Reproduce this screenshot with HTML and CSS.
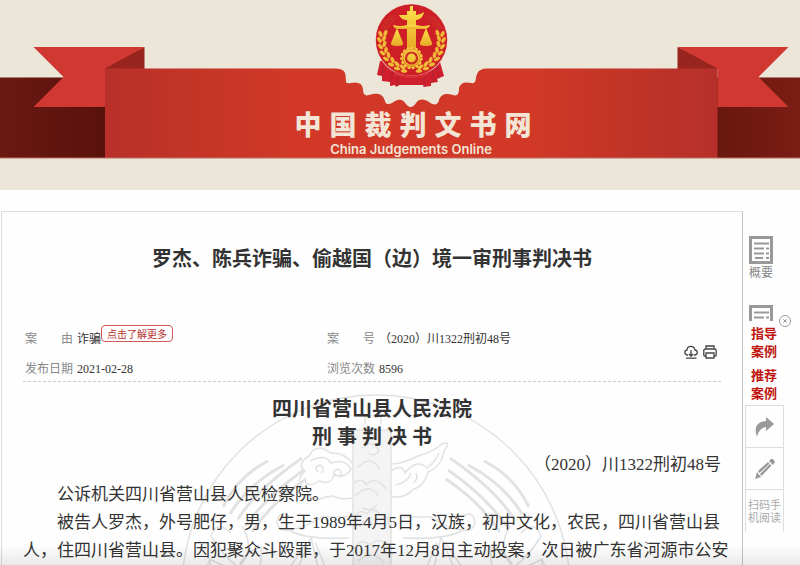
FILE: index.html
```html
<!DOCTYPE html>
<html lang="zh-CN">
<head>
<meta charset="utf-8">
<title>中国裁判文书网</title>
<link rel="stylesheet" href="styles.css">
</head>
<body>
<header class="banner">
  <svg class="banner-art" viewBox="0 0 800 190" preserveAspectRatio="xMidYMin slice" aria-hidden="true">
    <defs>
      <linearGradient id="band" x1="0" x2="1" y1="0" y2="0">
        <stop offset="0" stop-color="#b83029"/><stop offset=".12" stop-color="#c13427"/><stop offset=".3" stop-color="#d13827"/>
        <stop offset=".7" stop-color="#d13827"/><stop offset=".85" stop-color="#c13427"/><stop offset="1" stop-color="#b6302b"/>
      </linearGradient>
      <linearGradient id="darkLeft"><stop offset="0" stop-color="#6b1811"/><stop offset="1" stop-color="#59120d"/></linearGradient>
      <linearGradient id="darkRight"><stop offset="0" stop-color="#68170f"/><stop offset="1" stop-color="#7b1d14"/></linearGradient>
      <linearGradient id="gold" x1="0" x2="0" y1="0" y2="1"><stop offset="0" stop-color="#fbe14b"/><stop offset="1" stop-color="#e9a927"/></linearGradient>
      <g id="grain" fill="#f0bd37" stroke="#f0bd37" stroke-width=".6">
        <ellipse cx="385.500" cy="33" rx="1.500" ry="3" transform="rotate(18 385.500 33)"/>
        <ellipse cx="380.500" cy="34" rx="1.500" ry="3" transform="rotate(-22 380.500 34)"/>
        <ellipse cx="384" cy="38.500" rx="1.500" ry="3" transform="rotate(24 384 38.500)"/>
        <ellipse cx="379.500" cy="40" rx="1.500" ry="3" transform="rotate(-32 379.500 40)"/>
        <ellipse cx="384.500" cy="44" rx="1.500" ry="3" transform="rotate(18 384.500 44)"/>
        <ellipse cx="380.500" cy="46.500" rx="1.500" ry="3" transform="rotate(-42 380.500 46.500)"/>
        <ellipse cx="386" cy="50" rx="1.500" ry="3" transform="rotate(4 386 50)"/>
        <ellipse cx="382.500" cy="53" rx="1.500" ry="3" transform="rotate(-52 382.500 53)"/>
        <ellipse cx="388.500" cy="55" rx="1.500" ry="3" transform="rotate(-8 388.500 55)"/>
        <ellipse cx="386" cy="59" rx="1.500" ry="3" transform="rotate(-62 386 59)"/>
        <ellipse cx="392.500" cy="60" rx="1.500" ry="3" transform="rotate(-22 392.500 60)"/>
        <ellipse cx="391" cy="64.500" rx="1.500" ry="3" transform="rotate(-72 391 64.500)"/>
        <ellipse cx="397" cy="64" rx="1.500" ry="3" transform="rotate(-38 397 64)"/>
        <ellipse cx="397" cy="68.500" rx="1.500" ry="3" transform="rotate(-80 397 68.500)"/>
        <ellipse cx="402.500" cy="67" rx="1.500" ry="3" transform="rotate(-52 402.500 67)"/>
        <ellipse cx="404" cy="71" rx="1.500" ry="3" transform="rotate(-86 404 71)"/>
        <path d="M384 29Q386 22 395 15M386 30Q389 23 396 18M381 29Q384 21 391 16" fill="none" stroke="#c6452a" stroke-width=".8"/>
      </g>
    </defs>
    <path fill="url(#darkLeft)" d="M0 77.500h106V158H0z"/>
    <path fill="url(#darkRight)" d="M716 77.500h84V158h-84z"/>
    <path fill="#ece6d9" d="M0 77h63.500L50 64H0zM758.500 77H800V60h-24z"/>
    <path fill="#97251e" d="M144.500 47v22H105V66zM677.500 47v22H718V66z"/>
    <path fill="#d13832" d="M33.500 47h111L105 68.500v38.500H33.500l30-30zM788.500 47h-111L717.500 68.500v38.500h71l-30-30z"/>
    <path fill="url(#band)" d="M105 68.500H336Q345 68.500 345.500 75L346 82Q347 84 351 83Q362 81 363 89Q363 97 369 95C378 92 383 94 385 101C386 106 391 104 395 101C401 98 404 101 406 104C409 108 413 108 416 103C419 98 425 99 429 102C434 106 438 105 439 100C441 94 446 93 453 95C459 97 459 91 459 88C461 82 466 82 471 83C477 84 475 79 477 74Q479 68.500 487 68.500H717.500V158H105z"/>
    <path d="M0 158h800" stroke="#bd7065"/>
    <path fill="#cf1f2d" d="M380 61l-3 14 5 1v5l8 1v4l5-1 1 2 3-2h25l-1 2 8-1v-3l7-1-1-3 7-3-4-14z"/>
    <path stroke="#a92333" fill="none" d="M382 76l2-12M391 82l2-14M398 86V74M424 86V74M434 82l-2-13M439 78l-2-13"/>
    <circle cx="411.500" cy="40" r="36.500" fill="#f0d7d0"/>
    <circle cx="411.500" cy="40" r="35.700" fill="#cf1f26"/>
    <use href="#grain"/>
    <use href="#grain" transform="matrix(-1 0 0 1 823 0)"/>
    <g fill="url(#gold)">
      <path d="M410 6h3v5h3v4q4 0 8-3-1 7-8 8v28h-9V20q-6 0-8-5h8v-4h3z"/>
      <path d="M393 25q7 2 14 0h9q7 2 14 0-1 4-6 4h-25q-5 0-6-4z"/>
      <path d="M397 28l6 15q1 3-6 3t-6-3zM426 28l6 15q1 3-6 3t-6-3z"/>
      <circle cx="411.500" cy="58" r="10"/>
    </g>
    <circle cx="411.500" cy="58" r="10" fill="none" stroke="#f4cb3a" stroke-width="2.500" stroke-dasharray="2.600 1.600"/>
    <circle cx="411.500" cy="58" r="5.500" fill="none" stroke="#ca2a22" stroke-width="2.200"/>
    <circle cx="411.500" cy="58" r="8.500" fill="none" stroke="#d45b25" stroke-width=".6"/>
    <path d="M393 71q19 9 37 0l-2 4q-16 6-33 0z" fill="#d93139"/>
  </svg>
  <div class="brand">
    <div class="brand-name">中国裁判文书网</div>
    <div class="brand-en">China Judgements Online</div>
  </div>
</header>

<div class="page">
  <main class="document">
    <h1 class="title">罗杰、陈兵诈骗、偷越国（边）境一审刑事判决书</h1>
    <section class="meta">
      <dl class="meta-list">
        <div class="meta-item"><dt><span>案</span><span>由</span></dt><dd>诈骗</dd><dd><button class="more" type="button">点击了解更多</button></dd></div>
        <div class="meta-item"><dt><span>案</span><span>号</span></dt><dd>（2020）川1322刑初48号</dd></div>
        <div class="meta-item"><dt>发布日期</dt><dd>2021-02-28</dd></div>
        <div class="meta-item"><dt>浏览次数</dt><dd>8596</dd></div>
      </dl>
      <div class="tools">
        <button type="button" aria-label="下载"><svg width="14" height="14" viewBox="0 0 14 14"><path d="M4 10H3.200C.2 9.500.2 5.500 3 5 3.500.2 10 .2 11 5c3 .5 3 4.500 0 5h-1M7 5v6M4.800 9L7 11.200 9.200 9M2 13.200h10.500"/></svg></button>
        <button type="button" aria-label="打印"><svg width="14" height="14" viewBox="0 0 14 14"><path d="M3 4V1h8v3M3 11H1.500Q.8 11 .8 10V5.500Q.8 4 2.500 4h9q1.700 0 1.700 1.500V10q0 1-.7 1H11M3 8h8v5H3z"/></svg></button>
      </div>
    </section>
    <article class="judgement">
      <svg class="seal" viewBox="0 0 390 390" aria-hidden="true">
        <defs>
          <g id="sealHalf">
            <path d="M42 113Q57 82 87 67M49 120Q67 90 103 71M57 125Q75 96 121 64M64 132Q88 100 123 76M71 138Q91 108 125 85" stroke-width="3"/>
            <path d="M61 132Q75 155 58 173Q43 164 30 142Q36 125 50 139M58 173Q45 175 29 165Q29 185 50 193M58 173Q63 158 80 153Q83 180 62 192M29 165Q18 190 41 205"/>
            <path d="M108 122q-10-6-12 6 1 10 13 8 15-2 31-13h28M108 136q16 10 60 8M126 148L88 205M134 148L157 205M130 143L104 205M130 143L144 205"/>
          </g>
        </defs>
        <circle cx="195" cy="195" r="194"/>
        <use href="#sealHalf"/>
        <use href="#sealHalf" transform="matrix(-1 0 0 1 390 0)"/>
        <g transform="translate(4 0)">
          <path class="seal-fill" d="M168 36h38v169h-38z"/>
          <path d="M180 30V22h16v8M168 36h38v169h-38zM168 70q-8-12-22-11-15-11-22 3-13 8-4 15-12 12 2 18 3 15 19 8l7-1q7 4 20 2M206 70q12 0 27-8 15-4 24-12 10-4 2 7-2 15-16 21-3 14-16 18-5 8-21 7M125 67q15-8 21 2 14-5 20 6-7 11-17 5-2 12-15 7-12 8-15-2M133 78q-5-5 2-7 5 2 2 8M151 82q-5-5 2-7 5 2 2 8M206 77q11-8 14 2 12-15 22-5 8-6 12-15M211 91q12-3 15-12M228 89q6-4 3-10M168 90q9-8 13 1 10-10 20 4M170 102q15-15 24 1M177 54q10-10 17 3-5 7-10 2M172 74q14-15 23 2M169 125q5-12 13-5 7-9 13 1 10 1 8 10M174 132q8-10 13-2M169 154q8-11 16-3 12-11 19 5M173 167q14-13 26 2M169 190q9-13 17-3 11-9 18 5M178 114q8 4 14-3"/>
        </g>
      </svg>
      <h2>四川省营山县人民法院</h2>
      <h2>刑 事 判 决 书</h2>
      <p class="case-number">（2020）川1322刑初48号</p>
      <p>公诉机关四川省营山县人民检察院。</p>
      <p>被告人罗杰，外号肥仔，男，生于1989年4月5日，汉族，初中文化，农民，四川省营山县<br>人，住四川省营山县。因犯聚众斗殴罪，于2017年12月8日主动投案，次日被广东省河源市公安</p>
    </article>
  </main>

  <aside class="sidebar">
    <a class="summary" href="#">
      <svg width="24" height="28" viewBox="0 0 24 28"><path d="M1.500 1.500h21v25h-21z" stroke-width="3"/><path d="M5 7.500h15M5 12.500h10M17 12.500h3M5 17.500h10M17 17.500h3M6 22h8M17 22h3" stroke-width="2"/></svg>
      <span>概要</span>
    </a>
    <a class="directory" href="#" aria-label="目录">
      <svg width="24" height="16" viewBox="0 0 24 16"><path d="M1.500 16V1.500h21V16" stroke-width="3"/><path d="M5 7.500h15M5 12.500h10M17 12.500h3" stroke-width="2"/></svg>
    </a>
    <button class="close" type="button" aria-label="关闭"><svg width="12" height="12" viewBox="0 0 12 12"><circle cx="6" cy="6" r="5.500"/><path d="M4.200 4.200l3.600 3.600M7.800 4.200L4.200 7.800"/></svg></button>
    <nav class="case-links">
      <a href="#">指导案例</a>
      <a href="#">推荐案例</a>
    </nav>
    <div class="actions">
      <button type="button" aria-label="分享"><svg width="20" height="22" viewBox="0 0 20 22"><path d="M11 1l8 7-8 7v-4Q4 12 2 21-3 6 11 5z"/></svg></button>
      <button type="button" aria-label="编辑"><svg width="22" height="22" viewBox="0 0 22 22"><path d="M1 21l2-7 4 5zM4 13L14 4l1.500 1.500L5.500 15zM6 16L16 6l1.500 1.500L7.500 18zM15 3l2-2q2-1 4 3l-2 3z"/></svg></button>
      <button type="button">扫码手机阅读</button>
    </div>
  </aside>
</div>
</body>
</html>
```

FILE: styles.css
```css
* { box-sizing: border-box; }

body {
  margin: 0;
  min-height: 100vh;
  background: #fefefe;
  color: #333;
  font-family: "Liberation Serif", "Noto Sans CJK SC", serif;
  overflow: hidden;
}

h1, h2, p, dl, dd { margin: 0; }
a { color: inherit; text-decoration: none; }
button {
  padding: 0;
  border: 0;
  background: none;
  color: inherit;
  font: inherit;
}
svg { display: block; }

.banner {
  position: relative;
  height: 190px;
  background: #ece6d9;
}
.banner-art {
  position: absolute;
  inset: 0;
  width: 100%;
  height: 100%;
}
.brand {
  position: relative;
  padding: 111px 0 0 22px;
  color: #f3e5d5;
  text-align: center;
}
.brand-name {
  padding-left: 12px;
  font: 900 27px/30px "Liberation Sans", "Noto Sans CJK SC", sans-serif;
  letter-spacing: 8px;
}
.brand-en { font: 600 13px/16px Inter, sans-serif; }

.page {
  display: flex;
  height: calc(100vh - 190px);
  padding: 21px 15px 0 1px;
  overflow: hidden;
}
.document {
  flex: 1;
  min-width: 0;
  padding: 0 21px;
  border: 1px solid #ddd;
  border-right-color: #c4c4c4;
  border-bottom: 0;
}

.title {
  padding-top: 32px;
  font-size: 20px;
  line-height: 30px;
  text-align: center;
}

.meta {
  display: flex;
  align-items: center;
  margin-top: 53px;
  border-bottom: 1px dashed #ccc;
}
.meta-list {
  display: grid;
  flex: 1;
  grid-template-columns: 302px 1fr;
  row-gap: 6px;
  padding-left: 2px;
  font-size: 12px;
  line-height: 24px;
}
.meta-item { display: flex; gap: 4px; height: 24px; }
.meta-item dt {
  display: flex;
  justify-content: space-between;
  width: 48px;
  color: #888;
}
.meta-item dd + dd { margin: -2px 0 0 -4px; }
.more {
  display: block;
  padding: 0 5px;
  border: 1px solid #d05a55;
  border-radius: 4px;
  color: #b5322f;
  font: 10px/15px "Noto Sans CJK SC", sans-serif;
}
.tools { display: flex; gap: 5px; padding: 0 4px 5px 0; }
.tools svg { fill: none; stroke: #444; stroke-width: 1.3; }

.judgement {
  position: relative;
  padding-top: 13px;
  font-size: 17px;
  line-height: 28px;
}
.judgement h2 {
  position: relative;
  font-size: 20px;
  line-height: 28px;
  text-align: center;
}
.judgement p {
  position: relative;
  text-indent: 2em;
  white-space: nowrap;
}
.judgement .case-number {
  margin-bottom: 2px;
  text-align: right;
  text-indent: 0;
}
.seal {
  position: absolute;
  top: 12px;
  left: 158px;
  width: 390px;
  fill: none;
  stroke: #e2e2e2;
  stroke-width: 1.5;
}
.seal-fill { fill: #f4f4f4; stroke: none; }

.sidebar {
  position: relative;
  width: 42px;
  padding-top: 25px;
  color: #888;
}
.summary, .directory { display: block; padding-left: 6px; }
.summary { font-size: 12px; line-height: 18px; }
.directory { margin-top: 23px; }
.summary svg, .directory svg { fill: none; stroke: #999; }
.close { position: absolute; top: 104px; right: -6px; }
.close svg { fill: #fff; stroke: #999; stroke-width: 1; }
.case-links {
  display: flex;
  flex-direction: column;
  gap: 6px;
  width: 26px;
  margin: 4px 0 0 8px;
  color: #c0150f;
  font-size: 13px;
  font-weight: 700;
  line-height: 18px;
}
.actions {
  display: flex;
  flex-direction: column;
  width: 39px;
  margin: 2px 0 0 2px;
  border: 1px solid #ddd;
  border-bottom: 0;
}
.actions button {
  display: grid;
  place-items: center;
  height: 42px;
  border-bottom: 1px solid #ddd;
  color: #aaa;
  font: 11px/13px "Noto Sans CJK SC", sans-serif;
}
.actions button:last-child { padding: 0 2px; border-bottom: 0; }
.actions svg { fill: #999; }

body::after {
  content: "";
  position: fixed;
  right: 0;
  bottom: 0;
  left: 0;
  height: 20px;
  background: linear-gradient(transparent, rgb(0 0 0 / 8%));
  pointer-events: none;
}
```
